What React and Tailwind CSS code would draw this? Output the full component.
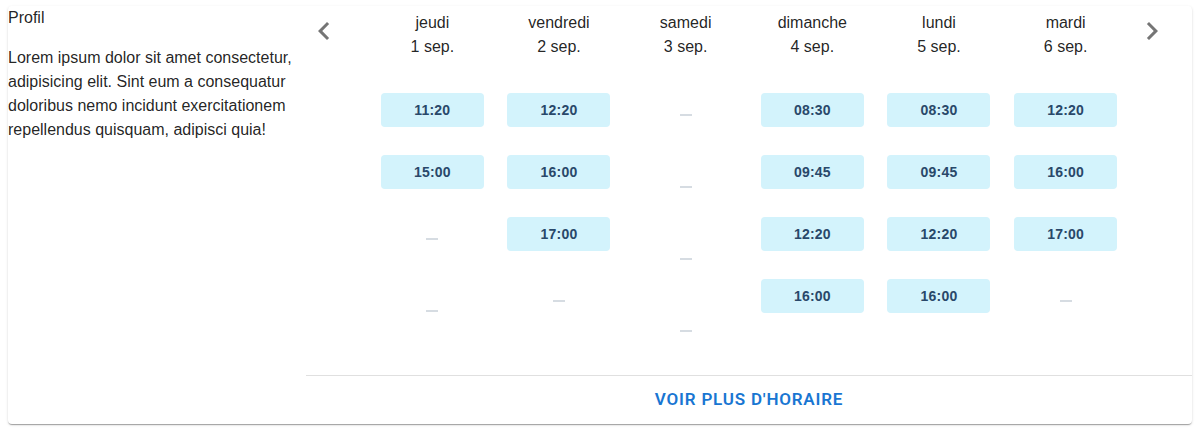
import React from "react";

const days = [
  { d: "jeudi", n: "1 sep.", t: ["11:20", "15:00", null, null] },
  { d: "vendredi", n: "2 sep.", t: ["12:20", "16:00", "17:00", null] },
  { d: "samedi", n: "3 sep.", t: [null, null, null, null] },
  { d: "dimanche", n: "4 sep.", t: ["08:30", "09:45", "12:20", "16:00"] },
  { d: "lundi", n: "5 sep.", t: ["08:30", "09:45", "12:20", "16:00"] },
  { d: "mardi", n: "6 sep.", t: ["12:20", "16:00", "17:00", null] },
];

function Chevron({ dir }) {
  return (
    <svg width="36" height="36" viewBox="0 0 24 24" fill="#757575">
      {dir === "left" ? (
        <path d="M15.41 7.41 14 6l-6 6 6 6 1.41-1.41L10.83 12z" />
      ) : (
        <path d="M10 6 8.59 7.41 13.17 12l-4.58 4.59L10 18l6-6z" />
      )}
    </svg>
  );
}

export default function App() {
  return (
    <div className="pl-2 pr-[5px] pt-[6px] pb-2 bg-white" style={{ fontFamily: '"Liberation Sans", Arial, sans-serif' }}>
      <div className="flex w-full h-[418px] bg-white rounded-[4px] shadow-[0px_2px_1px_-1px_rgba(0,0,0,0.2),0px_1px_1px_0px_rgba(0,0,0,0.14),0px_1px_3px_0px_rgba(0,0,0,0.12)]">
        <div className="w-[298px] shrink-0 text-[16px] leading-6 text-[rgba(0,0,0,0.87)]">
          <div>Profil</div>
          <p className="mt-4">
            Lorem ipsum dolor sit amet consectetur, adipisicing elit. Sint eum a consequatur doloribus nemo incidunt exercitationem repellendus quisquam, adipisci quia!
          </p>
        </div>
        <div className="flex-1 flex flex-col min-w-0">
          <div className="flex h-[369px]">
            <div className="w-[63px] shrink-0 pt-[7px]">
              <Chevron dir="left" />
            </div>
            <div className="flex-1 grid grid-cols-6">
              {days.map((day) => (
                <div key={day.d} className="flex flex-col items-center pt-[5px]">
                  <div className="text-center text-[16px] leading-6 text-[rgba(0,0,0,0.87)]">
                    <div>{day.d}</div>
                    <div>{day.n}</div>
                  </div>
                  <div className="mt-[34px] flex flex-col gap-7 w-full items-center">
                    {day.t.map((t, i) =>
                      t ? (
                        <div
                          key={i}
                          className="w-[103px] h-[34px] rounded-[4px] bg-[#d3f3fc] flex items-center justify-center text-[14px] font-bold tracking-[0.2px] text-[#29486a]"
                        >
                          {t}
                        </div>
                      ) : (
                        <div key={i} className="h-[44px] w-[103px] flex items-center justify-center">
                          <div className="w-3 h-0.5 bg-[#d6dce2]" />
                        </div>
                      )
                    )}
                  </div>
                </div>
              ))}
            </div>
            <div className="w-[63px] shrink-0 pl-[5px] pt-[7px]">
              <Chevron dir="right" />
            </div>
          </div>
          <div className="border-t border-[#e0e0e0] h-[49px] flex items-center justify-center">
            <span
              className="uppercase text-[17px] font-semibold tracking-[0.8px] text-[#1976d2]"
              style={{ fontFamily: "Roboto, sans-serif" }}
            >
              Voir plus d'horaire
            </span>
          </div>
        </div>
      </div>
    </div>
  );
}
